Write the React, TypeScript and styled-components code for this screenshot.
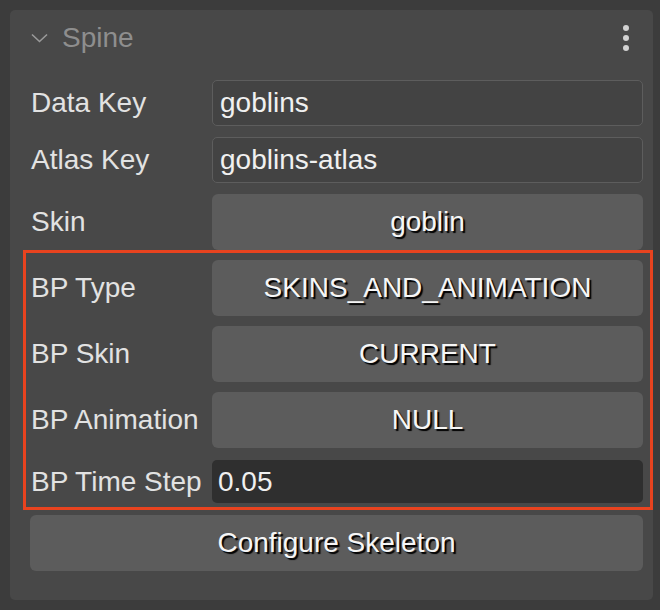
import styled, { createGlobalStyle } from 'styled-components';

const GlobalStyle = createGlobalStyle`
    html, body {
        margin: 0;
        padding: 0;
        background: #3c3c3c;
    }
    body {
        font-family: "Liberation Sans", Arial, Helvetica, sans-serif;
    }
`;

const Page = styled.div`
    box-sizing: border-box;
    width: 660px;
    height: 610px;
    padding: 10px 7px 10px 10px;
`;

const Panel = styled.section`
    box-sizing: border-box;
    background: #484848;
    border-radius: 5px;
    padding: 0 10px 29px 20px;
    display: flex;
    flex-direction: column;
`;

const Header = styled.div`
    height: 56px;
    display: flex;
    align-items: center;
    gap: 14px;
    padding-left: 1px;
`;

const Title = styled.span`
    flex: 1;
    font-size: 28px;
    color: #8e8e8e;
    line-height: 1;
`;

const MenuDots = styled.div`
    display: flex;
    flex-direction: column;
    gap: 4px;
    margin-right: 14px;

    span {
        width: 6px;
        height: 6px;
        border-radius: 50%;
        background: #d2d2d2;
    }
`;

const Body = styled.div`
    display: flex;
    flex-direction: column;
    padding-top: 14px;
`;

const Row = styled.div<{ $gap?: number }>`
    display: grid;
    grid-template-columns: 182px 1fr;
    align-items: center;
    margin-bottom: ${p => p.$gap ?? 11}px;
`;

const Label = styled.label`
    font-size: 28px;
    color: #e2e2e2;
    padding-left: 1px;
    white-space: nowrap;
`;

const TextInput = styled.input<{ $dark?: boolean }>`
    box-sizing: border-box;
    width: 100%;
    height: ${p => (p.$dark ? 43 : 46)}px;
    margin: 0;
    padding: 0 0 0 ${p => (p.$dark ? 6 : 7)}px;
    font-family: inherit;
    font-size: 28px;
    color: #f0f0f0;
    background: ${p => (p.$dark ? '#2f2f2f' : '#434343')};
    border: ${p => (p.$dark ? 'none' : '1px solid #5d5d5d')};
    border-radius: 5px;
    outline: none;
`;

const Button = styled.button`
    box-sizing: border-box;
    width: 100%;
    height: 56px;
    margin: 0;
    padding: 0;
    font-family: inherit;
    font-size: 28px;
    color: #f6f6f6;
    text-shadow: 2px 2px 1px #000;
    background: #5c5c5c;
    border: none;
    border-radius: 6px;
    cursor: pointer;
`;

const Highlight = styled.div`
    display: flex;
    flex-direction: column;
    margin: 0 -10px 5px -7px;
    padding: 7px 7px 4px 4px;
    border: 3px solid #e8431f;
`;

const Chevron = () => (
    <svg width="17" height="10" viewBox="0 0 17 10" fill="none">
        <path d="M1 1.5 L8.5 8.5 L16 1.5" stroke="#9a9a9a" strokeWidth="1.6" />
    </svg>
);

const App = () => {
    return (
        <Page>
            <GlobalStyle />
            <Panel>
                <Header>
                    <Chevron />
                    <Title>Spine</Title>
                    <MenuDots>
                        <span />
                        <span />
                        <span />
                    </MenuDots>
                </Header>
                <Body>
                    <Row>
                        <Label>Data Key</Label>
                        <TextInput defaultValue="goblins" />
                    </Row>
                    <Row>
                        <Label>Atlas Key</Label>
                        <TextInput defaultValue="goblins-atlas" />
                    </Row>
                    <Row $gap={0}>
                        <Label>Skin</Label>
                        <Button>goblin</Button>
                    </Row>
                    <Highlight>
                        <Row $gap={10}>
                            <Label>BP Type</Label>
                            <Button>SKINS_AND_ANIMATION</Button>
                        </Row>
                        <Row $gap={10}>
                            <Label>BP Skin</Label>
                            <Button>CURRENT</Button>
                        </Row>
                        <Row $gap={12}>
                            <Label>BP Animation</Label>
                            <Button>NULL</Button>
                        </Row>
                        <Row $gap={0}>
                            <Label>BP Time Step</Label>
                            <TextInput $dark defaultValue="0.05" />
                        </Row>
                    </Highlight>
                    <Button>Configure Skeleton</Button>
                </Body>
            </Panel>
        </Page>
    );
};

export default App;
